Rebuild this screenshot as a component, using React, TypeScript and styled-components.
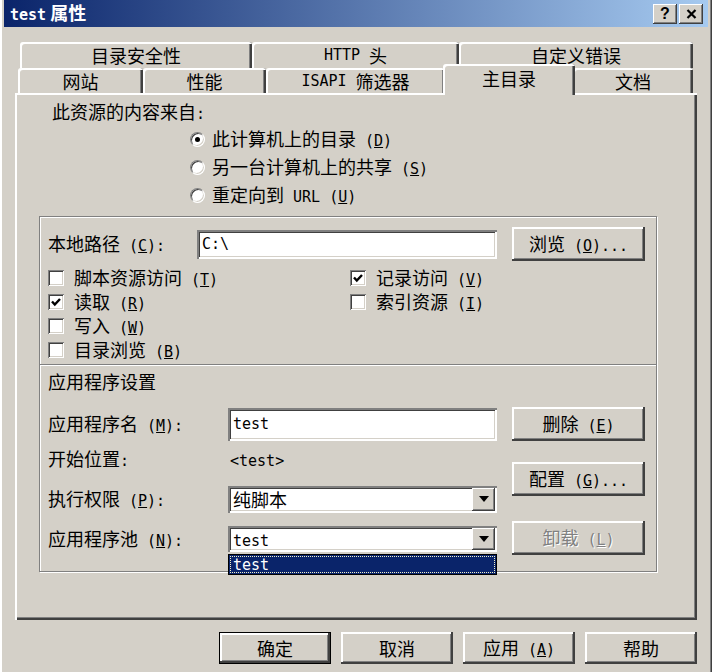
import React from "react"
import styled, { createGlobalStyle } from "styled-components"

const GlobalStyle = createGlobalStyle`
  html, body {
    margin: 0;
    padding: 0;
    background: #d4d0c8;
  }
  body {
    font-family: "Noto Sans CJK SC", "Noto Sans", sans-serif;
    font-size: 18px;
    line-height: 20px;
    color: #000;
  }
  * {
    box-sizing: border-box;
  }
`

const raised = `
  background: #d4d0c8;
  box-shadow: inset -2px -2px #404040, inset 2px 2px #ffffff, inset -3px -3px #808080;
`

const sunken = `
  background: #ffffff;
  box-shadow: inset 2px 2px #808080, inset -2px -2px #ffffff, inset 3px 3px #404040, inset -3px -3px #d4d0c8;
`

const Window = styled.div`
  width: 712px;
  height: 672px;
  padding: 0 4px;
  background: #d4d0c8;
  box-shadow: inset 2px 0 #ffffff, inset -1px 0 #404040, inset -2px 0 #808080;
  overflow: hidden;
`

const TitleBar = styled.div`
  height: 27px;
  display: flex;
  align-items: center;
  padding: 0 5px 0 6px;
  background: linear-gradient(to right, #0a246a, #a6caf0);
  color: #fff;
  font-weight: bold;
  font-size: 18px;
`

const TitleText = styled.div`
  flex: 1;
  white-space: pre;
`

const TitleLatin = styled.span`
  font-family: "DejaVu Sans Mono", monospace;
  font-size: 15px;
`

const CaptionButton = styled.div`
  width: 24px;
  height: 20px;
  display: flex;
  align-items: center;
  justify-content: center;
  color: #000;
  font-family: "Liberation Sans", sans-serif;
  font-size: 16px;
  ${raised}
  box-shadow: inset -1px -1px #404040, inset 1px 1px #ffffff, inset -2px -2px #808080;

  & + & {
    margin-left: 2px;
  }
`

const L = styled.span`
  font-family: "DejaVu Sans Mono", monospace;
  font-size: 15px;
  white-space: pre;
`

const Body = styled.div`
  padding: 15px 11px 0;
`

const TabRow = styled.div<{ $offset: number; $h: number }>`
  display: flex;
  align-items: flex-end;
  height: ${p => p.$h}px;
  margin-left: ${p => p.$offset}px;
`

const Tab = styled.div<{ $w: number; $active?: boolean }>`
  flex: none;
  width: ${p => p.$w}px;
  height: 100%;
  display: flex;
  align-items: center;
  justify-content: center;
  background: #d4d0c8;
  border-radius: 3px 3px 0 0;
  box-shadow: inset 2px 2px #ffffff, inset -2px 0 #404040, inset -3px 0 #808080;
  ${p =>
    p.$active &&
    `
    width: ${p.$w + 4}px;
    height: 31px;
    margin: 0 -2px -2px;
    padding-bottom: 4px;
    position: relative;
    z-index: 2;
  `}
`

const Panel = styled.div`
  height: 527px;
  padding-top: 8px;
  background: #d4d0c8;
  box-shadow: inset 2px 2px #ffffff, inset -2px -2px #404040, inset -3px -3px #808080;
`

const Heading = styled.div`
  margin-left: 37px;
  height: 20px;
`

const RadioList = styled.div`
  margin: 4px 0 0 175px;
`

const RadioRow = styled.div`
  height: 28px;
  display: flex;
  align-items: center;
  gap: 7px;
`

const RadioDot = styled.span<{ $on?: boolean }>`
  position: relative;
  flex: none;
  width: 15px;
  height: 15px;
  border-radius: 50%;
  background: #fff;
  border: 1px solid;
  border-color: #808080 #ffffff #ffffff #808080;
  box-shadow: inset 1px 1px #404040, inset -1px -1px #d4d0c8;
  ${p =>
    p.$on &&
    `
    &::after {
      content: "";
      position: absolute;
      left: 4px;
      top: 4px;
      width: 5px;
      height: 5px;
      border-radius: 50%;
      background: #000;
    }
  `}
`

const GroupBox = styled.div`
  margin: 7px 40px 0 24px;
  padding: 10px 11px 16px 8px;
  border: 1px solid #808080;
  box-shadow: inset 1px 1px #ffffff, 1px 1px #ffffff;
`

const Row = styled.div<{ $h: number; $mt?: number }>`
  display: flex;
  align-items: center;
  height: ${p => p.$h}px;
  margin-top: ${p => p.$mt ?? 0}px;
`

const Label = styled.div<{ $w: number }>`
  flex: none;
  width: ${p => p.$w}px;
`

const TextBox = styled.div<{ $w: number; $h: number }>`
  flex: none;
  width: ${p => p.$w}px;
  height: ${p => p.$h}px;
  display: flex;
  align-items: center;
  padding-left: 5px;
  ${sunken}
`

const Value = styled.div`
  padding-left: 2px;
`

const Button = styled.button<{ $w?: number; $h?: number; $mt?: number; $primary?: boolean }>`
  flex: none;
  width: ${p => p.$w ?? 133}px;
  height: ${p => p.$h ?? 34}px;
  margin: ${p => p.$mt ?? 0}px 0 0;
  padding: 0;
  border: ${p => (p.$primary ? "1px solid #000" : "0")};
  font: inherit;
  color: #000;
  ${raised}

  &:disabled {
    color: #808080;
    text-shadow: 1px 1px #ffffff;
  }
`

const PathRow = styled(Row)`
  gap: 15px;
`

const Checks = styled.div`
  margin-top: 5px;
  display: grid;
  grid-template-columns: 302px auto;
  grid-template-rows: repeat(4, 24px);
  grid-auto-flow: column;
`

const CheckItem = styled.div`
  display: flex;
  align-items: center;
`

const CheckBox = styled.span`
  flex: none;
  width: 16px;
  height: 16px;
  margin-right: 10px;
  display: flex;
  align-items: center;
  justify-content: center;
  ${sunken}
  box-shadow: inset 1px 1px #808080, inset -1px -1px #ffffff, inset 2px 2px #404040, inset -2px -2px #d4d0c8;
`

const Separator = styled.div`
  margin: 2px -11px 0 -8px;
  border-top: 1px solid #808080;
  border-bottom: 1px solid #ffffff;
`

const SubHeading = styled.div`
  margin-top: 5px;
  height: 20px;
`

const Apps = styled.div`
  display: flex;
  margin-top: 16px;
`

const AppFields = styled.div`
  flex: 1;
  display: flex;
  flex-direction: column;
`

const AppButtons = styled.div`
  flex: none;
  width: 133px;
  margin-left: 15px;
  display: flex;
  flex-direction: column;
`

const Select = styled.div<{ $h: number }>`
  position: relative;
  flex: none;
  width: 269px;
  height: ${p => p.$h}px;
  padding: 2px;
  display: flex;
  align-items: center;
  ${sunken}
`

const SelectText = styled.div`
  flex: 1;
  padding-left: 3px;
`

const ArrowButton = styled.div`
  width: 23px;
  height: 100%;
  display: flex;
  align-items: center;
  justify-content: center;
  ${raised}
  box-shadow: inset -1px -1px #404040, inset 1px 1px #ffffff, inset -2px -2px #808080;
`

const DropList = styled.div`
  position: absolute;
  left: 0;
  right: 0;
  top: calc(100% + 2px);
  height: 21px;
  border: 1px solid #000;
  background: #0a246a;
  color: #fff;
  padding: 1px;
  z-index: 3;
`

const DropItem = styled.div`
  height: 100%;
  display: flex;
  align-items: center;
  padding-left: 3px;
  outline: 1px dotted #f0f0c8;
  outline-offset: -1px;
`

const ButtonBar = styled.div`
  display: flex;
  justify-content: flex-end;
  gap: 10px;
  margin-top: 12px;
`

const Key = ({ k, tail = "" }: { k: string; tail?: string }) => (
  <L>
    {" ("}
    <u>{k}</u>
    {")" + tail}
  </L>
)

const Check = () => (
  <svg width="12" height="12" viewBox="0 0 12 12">
    <polyline points="2,5.5 4.8,8.5 10,3" fill="none" stroke="#000" strokeWidth="2.4" />
  </svg>
)

const Arrow = () => (
  <svg width="10" height="6" viewBox="0 0 10 6">
    <polygon points="0,0 10,0 5,6" fill="#000" />
  </svg>
)

const CloseGlyph = () => (
  <svg width="11" height="10" viewBox="0 0 11 10">
    <path d="M1.5 1 L9.5 9 M9.5 1 L1.5 9" stroke="#000" strokeWidth="2.2" />
  </svg>
)

const checks = [
  { label: "脚本资源访问", k: "T", on: false },
  { label: "读取", k: "R", on: true },
  { label: "写入", k: "W", on: false },
  { label: "目录浏览", k: "B", on: false },
  { label: "记录访问", k: "V", on: true },
  { label: "索引资源", k: "I", on: false },
]

const App = () => {
  return (
    <Window>
      <GlobalStyle />
      <TitleBar>
        <TitleText>
          <TitleLatin>test</TitleLatin> 属性
        </TitleText>
        <CaptionButton>?</CaptionButton>
        <CaptionButton>
          <CloseGlyph />
        </CaptionButton>
      </TitleBar>

      <Body>
        <TabRow $offset={5} $h={26}>
          <Tab $w={232}>目录安全性</Tab>
          <Tab $w={207}>
            <L>HTTP </L>头
          </Tab>
          <Tab $w={234}>自定义错误</Tab>
        </TabRow>
        <TabRow $offset={3} $h={25}>
          <Tab $w={125}>网站</Tab>
          <Tab $w={123}>性能</Tab>
          <Tab $w={179}>
            <L>ISAPI </L>筛选器
          </Tab>
          <Tab $w={128} $active>
            主目录
          </Tab>
          <Tab $w={120}>文档</Tab>
        </TabRow>

        <Panel>
          <Heading>
            此资源的内容来自<L>:</L>
          </Heading>
          <RadioList>
            <RadioRow>
              <RadioDot $on />
              <span>
                此计算机上的目录<Key k="D" />
              </span>
            </RadioRow>
            <RadioRow>
              <RadioDot />
              <span>
                另一台计算机上的共享<Key k="S" />
              </span>
            </RadioRow>
            <RadioRow>
              <RadioDot />
              <span>
                重定向到<L> URL</L>
                <Key k="U" />
              </span>
            </RadioRow>
          </RadioList>

          <GroupBox>
            <PathRow $h={34}>
              <Label $w={134}>
                本地路径<Key k="C" tail=":" />
              </Label>
              <TextBox $w={300} $h={29}>
                <L>C:\</L>
              </TextBox>
              <Button>
                浏览<Key k="O" tail="..." />
              </Button>
            </PathRow>

            <Checks>
              {checks.map(c => (
                <CheckItem key={c.k}>
                  <CheckBox>{c.on && <Check />}</CheckBox>
                  <span>
                    {c.label}
                    <Key k={c.k} />
                  </span>
                </CheckItem>
              ))}
            </Checks>

            <Separator />
            <SubHeading>应用程序设置</SubHeading>

            <Apps>
              <AppFields>
                <Row $h={34}>
                  <Label $w={180}>
                    应用程序名<Key k="M" tail=":" />
                  </Label>
                  <TextBox $w={269} $h={33}>
                    <L>test</L>
                  </TextBox>
                </Row>
                <Row $h={20} $mt={8}>
                  <Label $w={180}>
                    开始位置<L>:</L>
                  </Label>
                  <Value>
                    <L>&lt;test&gt;</L>
                  </Value>
                </Row>
                <Row $h={28} $mt={16}>
                  <Label $w={180}>
                    执行权限<Key k="P" tail=":" />
                  </Label>
                  <Select $h={27}>
                    <SelectText>纯脚本</SelectText>
                    <ArrowButton>
                      <Arrow />
                    </ArrowButton>
                  </Select>
                </Row>
                <Row $h={28} $mt={12}>
                  <Label $w={180}>
                    应用程序池<Key k="N" tail=":" />
                  </Label>
                  <Select $h={26}>
                    <SelectText>
                      <L>test</L>
                    </SelectText>
                    <ArrowButton>
                      <Arrow />
                    </ArrowButton>
                    <DropList>
                      <DropItem>
                        <L>test</L>
                      </DropItem>
                    </DropList>
                  </Select>
                </Row>
              </AppFields>
              <AppButtons>
                <Button>
                  删除<Key k="E" />
                </Button>
                <Button $mt={21}>
                  配置<Key k="G" tail="..." />
                </Button>
                <Button $mt={25} disabled>
                  卸载<Key k="L" />
                </Button>
              </AppButtons>
            </Apps>
          </GroupBox>
        </Panel>

        <ButtonBar>
          <Button $w={112} $h={32} $primary>
            确定
          </Button>
          <Button $w={112} $h={32}>
            取消
          </Button>
          <Button $w={112} $h={32}>
            应用<Key k="A" />
          </Button>
          <Button $w={112} $h={32}>
            帮助
          </Button>
        </ButtonBar>
      </Body>
    </Window>
  )
}

export default App
